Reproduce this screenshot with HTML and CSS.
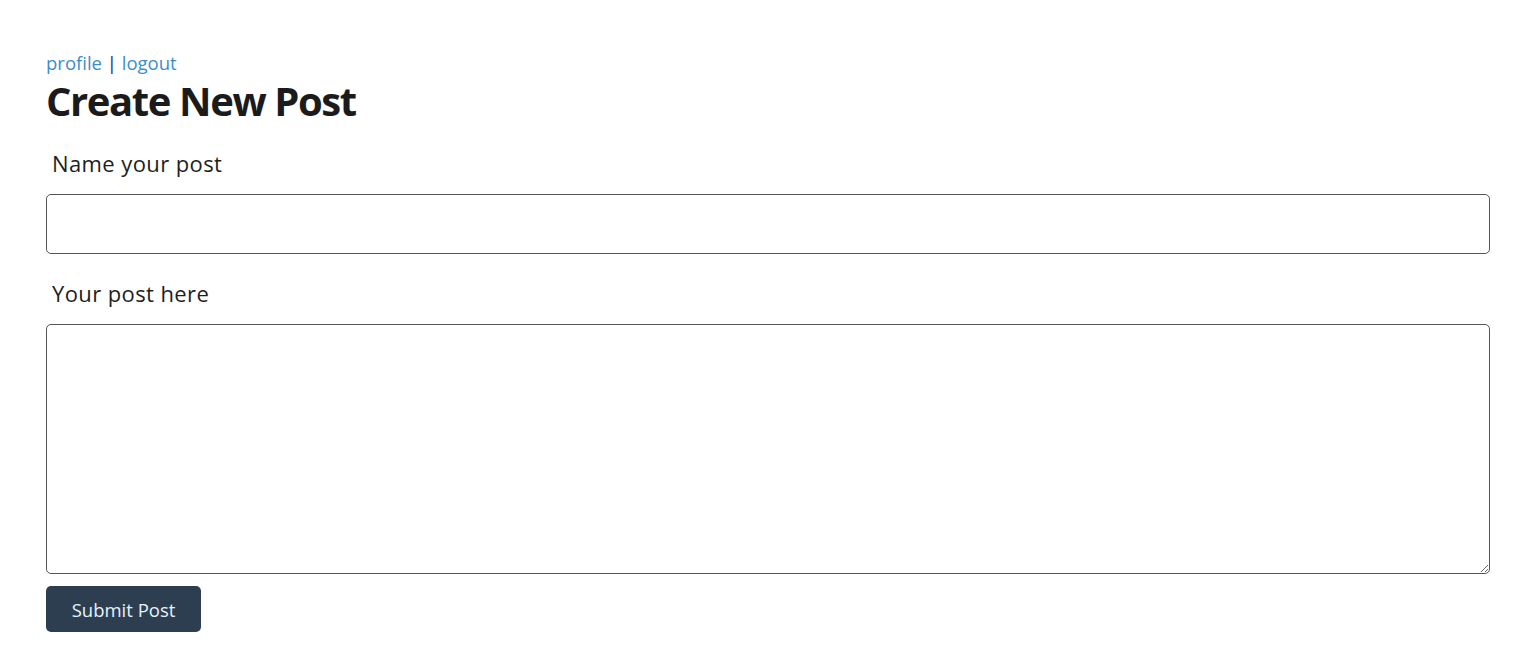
FILE: index.html
```html
<!DOCTYPE html>
<html lang="en">
  <head>
    <meta charset="UTF-8" />
    <title>Create New Post</title>
    <link rel="stylesheet" href="styles.css">
  </head>
  <body>
    <div class="container">
      <div class="nav">
        <a href="#">profile</a> | <a href="#">logout</a>
      </div>
      <h1>Create New Post</h1>

      <form id="post-form">
        <label for="post-title">Name your post</label>
        <input type="text" id="post-title" />

        <label for="post-body">Your post here</label>
        <textarea id="post-body"></textarea>

        <button type="submit">Submit Post</button>
      </form>
    </div>
  </body>
</html>
```

FILE: styles.css
```css
/* General Styles */
body {
  font-family: "Open Sans", "Noto Sans", sans-serif;
  background: #fff;
  color: #1e1e1e;
  margin: 0;
  padding: 50px 33px 0 46px;
}

.nav {
  font-size: 18.5px;
  line-height: 26px;
  color: #1a237e;
}

.nav a {
  color: #3b8fc9;
  text-decoration: none;
}

h1 {
  margin: 0 0 -2px;
  font-size: 40px;
  line-height: 50px;
  font-weight: 700;
  letter-spacing: -1.4px;
  color: #1b1b1b;
}

label {
  display: block;
  margin: 24px 0 0 6px;
  font-size: 22px;
  line-height: 30px;
  letter-spacing: 0.4px;
}

input[type="text"],
textarea {
  display: block;
  box-sizing: border-box;
  width: 100%;
  margin-top: 16px;
  border: 1px solid #555;
  border-radius: 5px;
  font-family: inherit;
  font-size: 18px;
}

input[type="text"] {
  height: 60px;
  padding: 0 12px;
}

textarea {
  height: 250px;
  padding: 10px 12px;
}

button {
  margin-top: 12px;
  background-color: #2c3e50;
  color: #e6f2fa;
  border: none;
  border-radius: 5px;
  width: 155px;
  height: 46px;
  font-family: inherit;
  font-size: 18.5px;
  cursor: pointer;
}
```
